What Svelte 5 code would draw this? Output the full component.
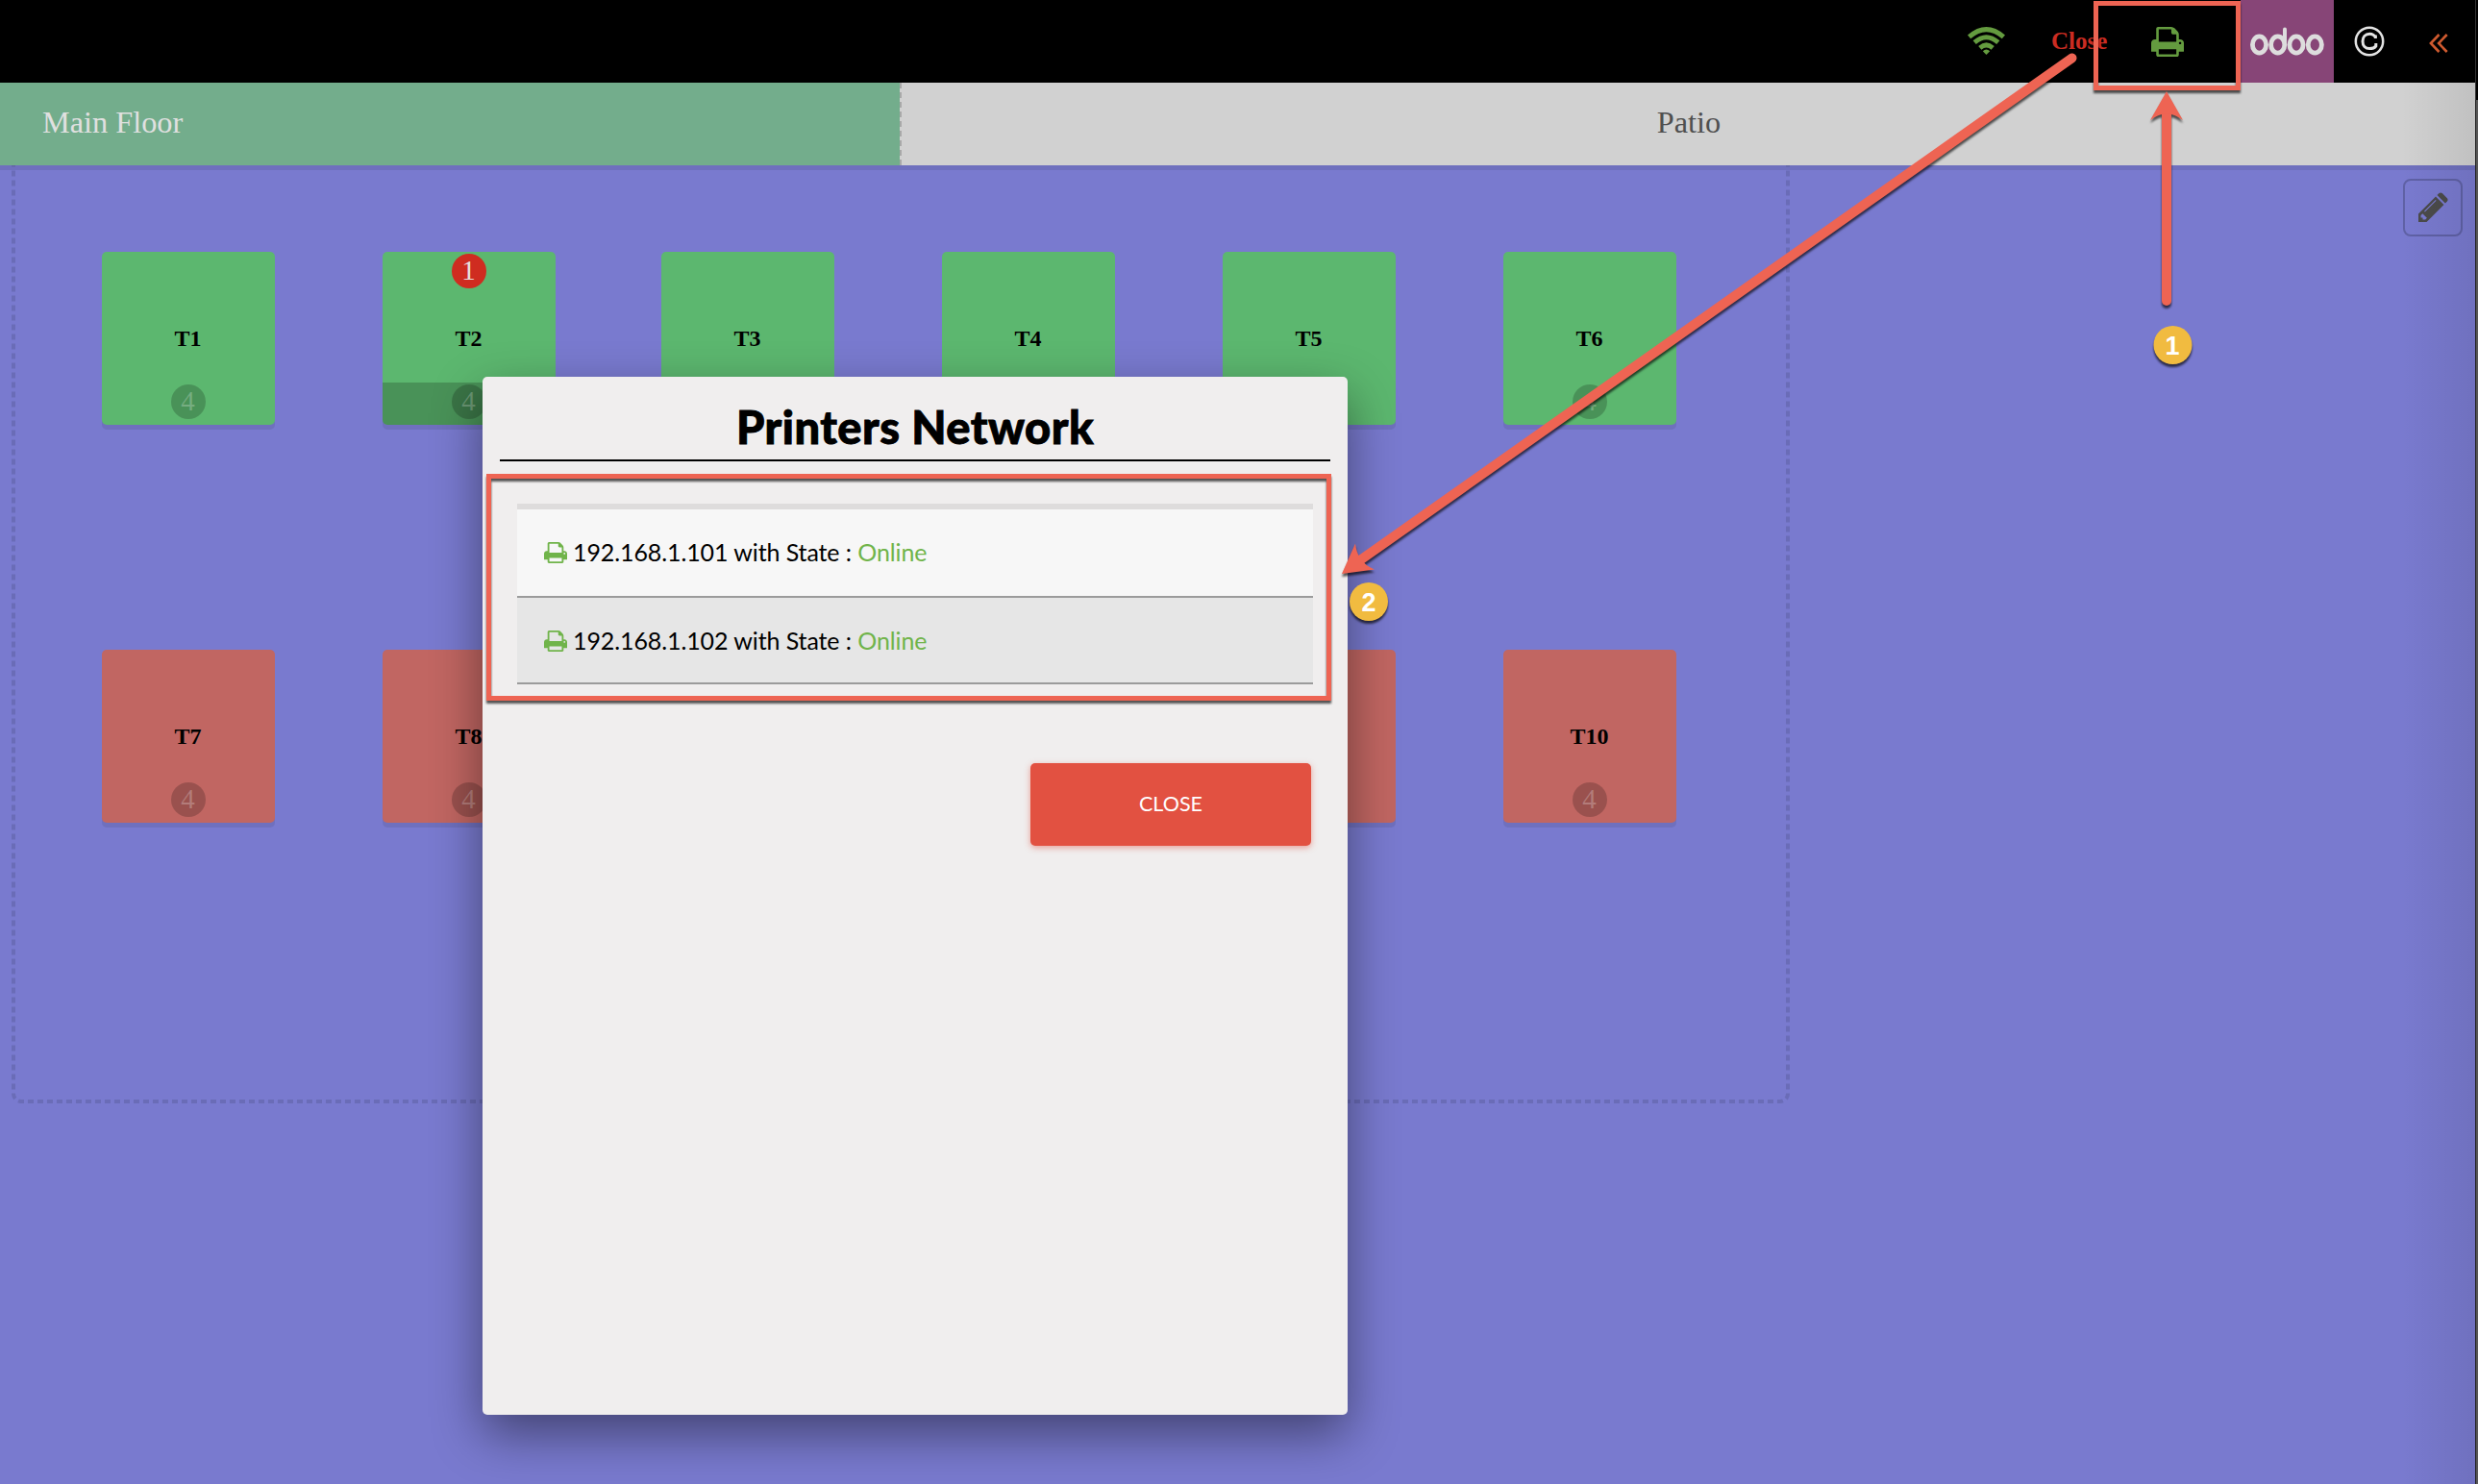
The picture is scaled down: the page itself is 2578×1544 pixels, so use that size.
<script>
  const tables = [
    { name: 'T1', x: 106, row: 1 }, { name: 'T2', x: 398, row: 1, orders: 1 },
    { name: 'T3', x: 688, row: 1 }, { name: 'T4', x: 980, row: 1 },
    { name: 'T5', x: 1272, row: 1 }, { name: 'T6', x: 1564, row: 1 },
    { name: 'T7', x: 106, row: 2 }, { name: 'T8', x: 398, row: 2 },
    { name: 'T9', x: 1272, row: 2 }, { name: 'T10', x: 1564, row: 2 }
  ];
  const printers = ['192.168.1.101', '192.168.1.102'];
</script>

{#snippet printer()}
  <svg class="printer" viewBox="0 0 1664 1536" preserveAspectRatio="none">
    <path fill="currentColor" fill-rule="evenodd" d="M384 1408h896v-256H384v256zm0-640h896V384h-160q-40 0-68-28t-28-68V128H384v640zm1152 64q0-26-19-45t-45-19-45 19-19 45 19 45 45 19 45-19 19-45zm128 0v416q0 13-9.500 22.500t-22.500 9.500h-224v160q0 40-28 68t-68 28H352q-40 0-68-28t-28-68v-160H32q-13 0-22.500-9.500T0 1248V832q0-79 56.500-135.500T192 640h64V96q0-40 28-68t68-28h672q40 0 88 20t76 48l152 152q28 28 48 76t20 88v256h64q79 0 135.500 56.500T1664 832z"/>
  </svg>
{/snippet}

<div class="app">
  <header>
    <svg class="wifi" viewBox="0 0 39 29"><g fill="none" stroke="#649b3f" stroke-width="4.900"><path d="M1.600 10.400Q19.500-5.200 37.400 10.400"/><path d="M7.200 16.200Q19.500 5.400 31.800 16.200"/><path d="M12.800 21.800Q19.500 16 26.200 21.800"/></g><path fill="#649b3f" d="M15.800 25.200Q19.500 22 23.200 25.200L19.500 29z"/></svg>
    <span class="exit">Close</span>
    <span class="net">{@render printer()}</span>
    <span class="odoo"><svg viewBox="0 0 77 30"><g fill="none" stroke="#ddd" stroke-width="4.800"><ellipse cx="9.500" cy="18.500" rx="7.100" ry="8.600"/><ellipse cx="28.700" cy="18.500" rx="7.100" ry="8.600"/><ellipse cx="48" cy="18.500" rx="7.100" ry="8.600"/><ellipse cx="67.300" cy="18.500" rx="7.100" ry="8.600"/><path stroke-width="4" stroke-linecap="round" d="M36 2.500V18"/></g></svg></span>
    <svg class="copy" viewBox="0 0 32 32"><g fill="none" stroke="#e3e3e3"><circle cx="16" cy="16" r="14.200" stroke-width="2.500"/><path stroke-width="3" d="M22.400 13V9.500M22.400 12Q20.500 8.300 16.300 8.300C11.700 8.300 9 11.600 9 16s2.700 7.600 7.200 7.600q4.600 0 6.600-2.600V18"/></g></svg>
    <svg class="chev" viewBox="0 0 20 20"><path fill="none" stroke="#cf5a2f" stroke-width="2.600" d="M10.500 1L1.900 10l8.600 9M18.700 1L10.100 10l8.600 9"/></svg>
  </header>
  <nav>
    <div class="tab active">Main Floor</div>
    <div class="tab">Patio</div>
  </nav>
  <main>
    <svg class="bounds" viewBox="0 0 1850 1000"><rect x="2" y="-100" width="1846" height="1074" rx="8"/></svg>
    {#each tables as t}
      <div class="table" class:red={t.row === 2} style:left="{t.x}px">
        {#if t.orders}<span class="fill"></span><span class="badge orders">{t.orders}</span>{/if}
        <b>{t.name}</b>
        <span class="badge">4</span>
      </div>
    {/each}
    <div class="edit"><svg viewBox="0 0 32 32"><path fill="#4b4b4b" fill-rule="evenodd" d="M1 31V22.500L19 4.500l8.500 8.500L9.500 31zM3.500 24v2.500h2v2h2.700l1.700-1.700-4.600-4.600zM18.800 8L7 19.800l.8.800L19.600 8.800zM20.500 3.100l2-2q1.700-1.300 3.300 0l5.100 5.100q1.300 1.700 0 3.300l-2 2z"/></svg></div>
  </main>
  <div class="shade"></div>
  <div class="topedge"></div>
  <div class="edge"></div>

  <section class="popup">
    <h1>Printers Network</h1>
    <ul>
      {#each printers as ip}
        <li>{@render printer()}<span>{ip} with State : <em>Online</em></span></li>
      {/each}
    </ul>
    <button>CLOSE</button>
  </section>

  <svg class="notes" viewBox="0 0 2578 1544">
    <g class="mark">
      <rect x="2180.500" y="3.500" width="148" height="88"/>
      <rect x="508.500" y="495.500" width="874" height="231"/>
      <path class="line" d="M2254 313V115"/>
      <path class="head" d="M2254 95l17 30q-8-6-17-7-9 1-17 7z"/>
      <path class="line" d="M2155.500 60.500L1412 585"/>
      <path class="head" d="M1396 597l14-31.500q1 9 5 15 5 8 15 12z"/>
    </g>
    <g class="step"><circle cx="2260.500" cy="359" r="20"/><circle cx="1424" cy="626" r="20"/></g>
    <text x="2260" y="368.500">1</text><text x="1424" y="635.500">2</text>
  </svg>
</div>

<style>
  :global(body) { margin: 0; }
  .app { position: relative; width: 2578px; height: 1544px; overflow: hidden; display: flex; flex-direction: column; background: #797acf; font-family: "Liberation Serif", serif; }
  header { height: 86px; flex: none; background: #000; box-sizing: border-box; display: flex; align-items: center; justify-content: flex-end; padding-right: 31px; }
  .wifi { width: 39px; height: 29px; margin: 0 48px 2px 0; }
  .exit { width: 58px; color: #cb2c22; font-size: 25px; font-weight: bold; padding-bottom: 1px; }
  .net { box-sizing: border-box; width: 139px; display: flex; padding-left: 46px; color: #649b3f; }
  .printer { width: 34px; height: 31px; display: block; }
  .odoo { width: 97px; height: 86px; background: #874577; display: flex; align-items: center; justify-content: center; }
  .odoo svg { width: 77px; height: 30px; }
  .copy { width: 32px; height: 32px; margin: 0 46px 0 21px; }
  .chev { width: 20px; height: 20px; margin-top: 3px; }
  nav { height: 86px; flex: none; display: flex; background: #d1d1d1; font-size: 32.300px; color: #4f4f4f; position: relative; z-index: 1; box-shadow: 0 5px rgba(0,0,0,.08); }
  .tab { flex: 1; box-sizing: border-box; display: flex; align-items: center; justify-content: center; padding: 0 2px 3px 0; }
  .active { flex: none; width: 938px; justify-content: flex-start; padding-left: 44px; background: linear-gradient(#73ad8c, #73ad8c) left / 936px 100% no-repeat, repeating-linear-gradient(#a9a9a9 0 6px, #d1d1d1 6px 10px); color: #e0e0e0; }
  main { flex: 1; position: relative; }
  .bounds { position: absolute; left: 12px; top: 0; width: 1850px; height: 1000px; fill: none; stroke: #6a6cb7; stroke-width: 4; stroke-dasharray: 6 4; }
  .table { position: absolute; top: 90px; width: 180px; height: 180px; border-radius: 5px; background: #5cb76f; box-shadow: 0 5px rgba(0,0,0,.08); }
  .table.red { top: 504px; background: #c16662; }
  .table b { position: absolute; inset: 0 1px 0 0; line-height: 180px; text-align: center; font-size: 24px; }
  .badge { position: absolute; left: 72px; bottom: 6px; width: 36px; height: 36px; box-sizing: border-box; padding-right: 1px; border-radius: 50%; background: rgba(0,0,0,.2); color: rgba(255,255,255,.25); font-size: 29px; line-height: 34px; text-align: center; }
  .orders { top: 2px; background: #cf2c20; color: #e6e0e0; }
  .fill { position: absolute; left: 0; right: 0; bottom: 0; height: 44px; background: rgba(0,0,0,.2); border-radius: 0 0 5px 5px; }
  .edit { position: absolute; left: 2500px; top: 14px; width: 58px; height: 56px; border: 2px solid #5f61a5; border-radius: 8px; display: flex; align-items: center; justify-content: center; }
  .edit svg { width: 32px; height: 32px; }
  .shade { position: absolute; right: 3px; top: 86px; bottom: 0; width: 76px; z-index: 2; background: linear-gradient(90deg, transparent, rgba(0,0,0,.08)); }
  .topedge { position: absolute; right: 0; top: 0; width: 2px; height: 104px; background: #000; border-left: 1px solid #333; z-index: 2; }
  .edge { position: absolute; right: 0; top: 104px; bottom: 0; width: 2px; border-left: 1px solid #222; background: #555; z-index: 2; }
  .popup { position: absolute; z-index: 3; left: 502px; top: 392px; width: 900px; height: 1080px; box-sizing: border-box; padding: 0 18px; border-radius: 5px; background: #f0eeee; box-shadow: 0 20px 52px rgba(0,0,0,.45); font-family: Lato, sans-serif; display: flex; flex-direction: column; }
  h1 { box-sizing: border-box; margin: 0; height: 88px; padding-top: 24px; line-height: 56px; border-bottom: 2px solid #000; text-align: center; font-size: 47px; font-weight: 900; letter-spacing: .5px; -webkit-text-stroke: .9px #000; }
  ul { list-style: none; margin: 44px 18px 0; padding: 0; border-top: 6px solid #dedcdc; font-size: 25px; letter-spacing: -.1px; }
  li { box-sizing: border-box; height: 92px; padding-left: 28px; display: flex; align-items: center; gap: 6px; background: #f7f7f7; border-bottom: 2px solid #9b9b9b; }
  li:nth-child(2) { height: 90px; padding-top: 2px; background: #e6e6e6; }
  li span { padding-bottom: 2px; }
  li .printer { width: 24px; height: 22px; color: #70b44a; }
  em { font-style: normal; color: #70b44a; }
  button { align-self: flex-end; margin: 82px 20px 0 0; width: 292px; height: 86px; padding: 0 0 3px; border: 0; border-radius: 5px; background: #e25141; color: #fff; font: 21.500px Lato, sans-serif; box-shadow: 0 2px 6px rgba(226,81,65,.5); }
  .notes { position: absolute; inset: 0; z-index: 4; width: 2578px; height: 1544px; }
  .mark { filter: drop-shadow(0 3px 1px rgba(0,0,0,.65)); }
  .mark rect, .line { fill: none; stroke: #ee6453; stroke-width: 5; }
  .mark .line { stroke-width: 10; stroke-linecap: round; }
  .head { fill: #ee6453; }
  .step { fill: #f1bb40; filter: drop-shadow(0 3px 1px rgba(0,0,0,.65)); }
  text { fill: #fff; font: bold 27px "Liberation Sans", sans-serif; text-anchor: middle; }
</style>
